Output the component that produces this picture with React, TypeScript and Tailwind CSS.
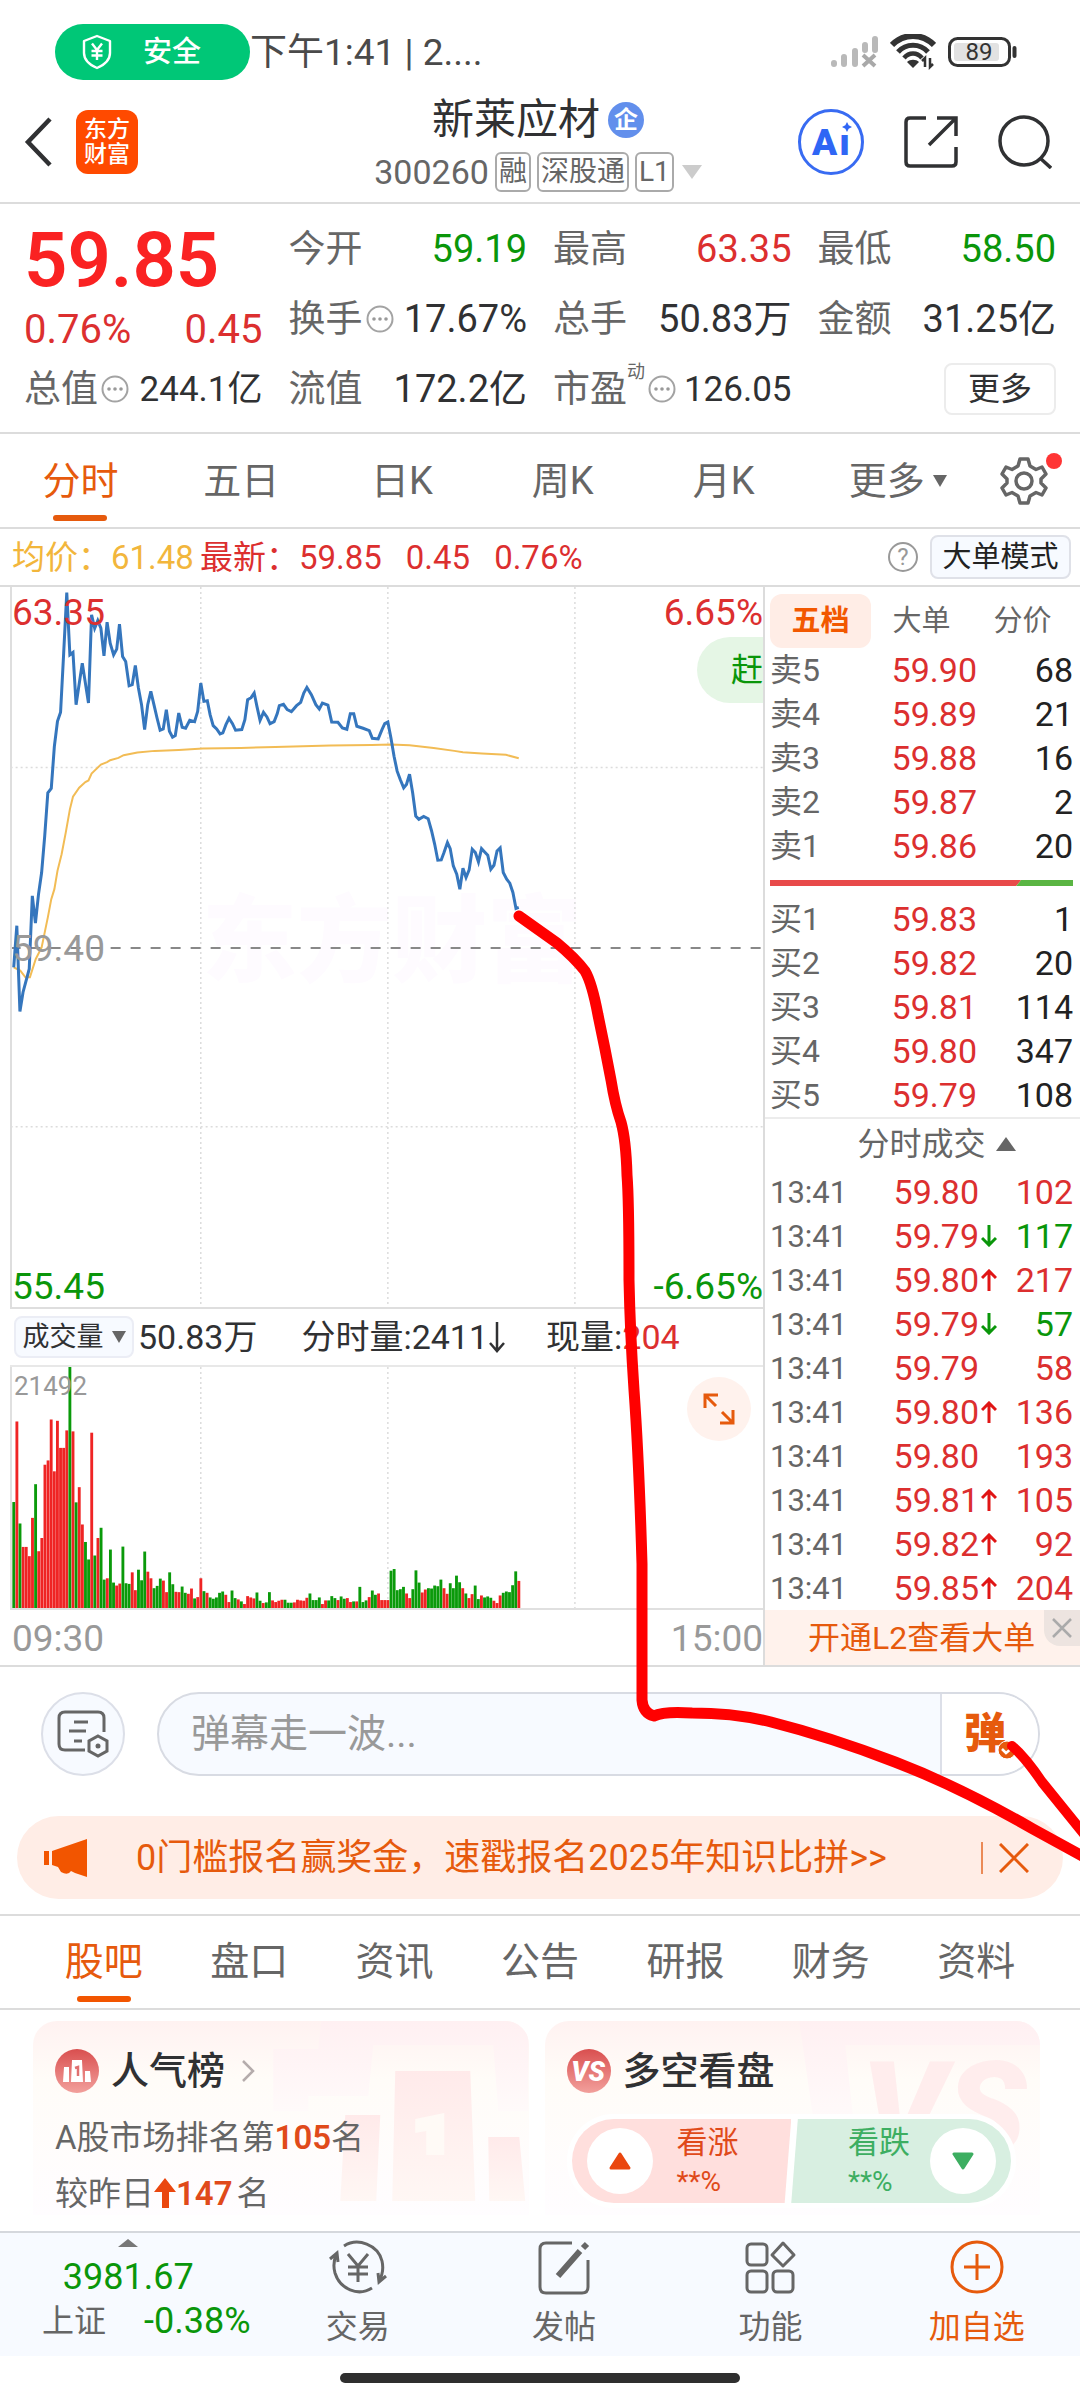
import { useState } from 'react';
import type { ReactNode } from 'react';

// 个股详情页：行情头部、分时图、五档盘口、成交明细、底部导航

const RED = 'text-[#dc2f2f]';
const GREEN = 'text-[#0a960a]';
const DARK = 'text-[#303133]';

const PERIODS = ['分时', '五日', '日K', '周K', '月K'];
const SECTIONS = ['股吧', '盘口', '资讯', '公告', '研报', '财务', '资料'];

const SELLS = [
  ['卖5', '59.90', '68'],
  ['卖4', '59.89', '21'],
  ['卖3', '59.88', '16'],
  ['卖2', '59.87', '2'],
  ['卖1', '59.86', '20'],
];

const BUYS = [
  ['买1', '59.83', '1'],
  ['买2', '59.82', '20'],
  ['买3', '59.81', '114'],
  ['买4', '59.80', '347'],
  ['买5', '59.79', '108'],
];

const TRADES = [
  { price: '59.80', dir: '', vol: '102' },
  { price: '59.79', dir: 'down', vol: '117' },
  { price: '59.80', dir: 'up', vol: '217' },
  { price: '59.79', dir: 'down', vol: '57' },
  { price: '59.79', dir: '', vol: '58' },
  { price: '59.80', dir: 'up', vol: '136' },
  { price: '59.80', dir: '', vol: '193' },
  { price: '59.81', dir: 'up', vol: '105' },
  { price: '59.82', dir: 'up', vol: '92' },
  { price: '59.85', dir: 'up', vol: '204' },
];

// 分时价格线
const PRICE_LINE =
  '41,1165 50,1040 59,1298 68,1240 86,1170 95,950 104,1032 113,945 122,880 131,770 140,640 150,627 159,500 168,425 177,398 186,220 195,38 204,225 213,218 222,375 240,250 258,370 267,105 276,145 285,122 294,145 303,228 312,127 321,190 331,225 340,208 348,133 357,230 366,245 376,318 385,315 394,257 403,325 412,375 421,450 430,375 439,335 448,375 457,415 466,452 475,448 484,390 493,455 502,473 510,468 520,400 530,443 540,446 552,422 566,426 575,395 584,310 593,365 603,363 611,405 620,438 630,448 640,463 648,460 657,435 666,416 676,432 685,452 703,450 712,420 720,360 730,354 739,340 747,380 756,422 766,398 776,412 785,432 797,426 806,402 812,378 824,374 835,390 847,396 862,378 874,368 883,340 892,323 905,345 918,375 928,388 937,370 953,376 964,427 982,428 995,445 1008,449 1018,402 1028,402 1037,440 1055,446 1073,453 1082,476 1099,478 1110,450 1118,432 1127,427 1136,475 1145,530 1154,575 1163,600 1173,625 1181,615 1190,584 1199,640 1208,710 1217,720 1231,711 1244,718 1254,755 1263,795 1272,843 1282,842 1290,820 1300,790 1308,808 1317,860 1327,885 1336,930 1345,867 1354,895 1363,872 1372,810 1381,820 1390,848 1399,808 1408,818 1417,828 1426,870 1435,858 1444,815 1453,806 1462,880 1472,900 1481,912 1490,940 1499,988 1507,985';

// 均价线
const AVG_LINE =
  '41,1165 60,1175 75,1195 88,1195 105,1140 122,1105 131,1060 140,1015 150,960 159,930 168,875 180,825 192,760 204,690 213,652 231,625 249,608 258,603 267,582 294,555 312,548 321,542 345,535 360,527 400,519 450,514 520,511 590,507 700,505 800,502 880,500 960,498 1080,496 1136,495 1190,497 1260,505 1320,514 1345,518 1400,522 1470,526 1507,536';

// 每分钟成交量，正数为红柱，负数为绿柱
const VOLUMES = [
  -321, 565, -256, 185, 185, 157, 273, -375, 172, 212, 434, 447, 571, 414, 567, 485, 485, 538, -730, 535,
  -320, 366, 253, -200, -147, 531, -159, 212, -243, -86, 90, -177, -77, 68, 74, -186, -75, -73, 108, 54,
  -116, -84, -171, 110, 90, -60, -67, -89, 83, 48, -108, -72, 49, 48, -65, -46, 43, 59, -29, 33,
  90, -51, 46, -32, -28, -32, -46, -50, 40, 18, -53, -30, 26, -20, 12, 36, 32, 29, -47, -22,
  15, -17, -48, 23, 18, 22, 25, -25, -16, -16, 17, 25, 23, 22, 31, -44, -24, -24, -32, 12,
  23, -23, -36, -30, 24, -35, -28, 30, 18, -20, 20, -64, -18, -23, 33, -53, -40, 44, 24, 24,
  24, -113, -118, -54, -57, -64, 44, 30, -57, -114, -77, 47, 56, -60, -59, -68, -66, -86, 60, 43,
  -75, -60, -98, -78, 60, -44, 30, 42, -68, -27, 38, -32, -35, -31, 22, 15, 38, -46, -50, -48,
  -69, -111, 82,
];

function MoreDots() {
  return (
    <svg viewBox="0 0 28 28" className="ml-[3px] h-7 w-7 shrink-0" aria-hidden="true">
      <circle cx="14" cy="14" r="12.5" fill="none" stroke="#a3a3a3" strokeWidth="2" />
      <g fill="#999">
        <circle cx="8" cy="14" r="1.8" />
        <circle cx="14" cy="14" r="1.8" />
        <circle cx="20" cy="14" r="1.8" />
      </g>
    </svg>
  );
}

function Stat({ label, value, color = DARK, size = 'text-[38px]', dots = false, sup }: {
  label: string;
  value: string;
  color?: string;
  size?: string;
  dots?: boolean;
  sup?: string;
}) {
  return (
    <div className="flex h-[70px] items-center whitespace-nowrap">
      <span className="text-[37px] text-[#666]">{label}</span>
      {sup && <span className="self-start pt-1 text-lg text-[#666]">{sup}</span>}
      {dots && <MoreDots />}
      <span className={`ml-auto ${size} ${color}`}>{value}</span>
    </div>
  );
}

function StatusBar() {
  return (
    <div className="flex h-[88px] items-center pt-4 pr-[62px] pl-[55px]">
      <div className="flex h-14 w-[195px] items-center rounded-full bg-[#00c777] pl-[26px] text-white">
        <svg viewBox="0 0 32 36" className="h-9 w-8" fill="none" stroke="#fff" strokeWidth="2.4" aria-hidden="true">
          <path d="M16 2 L29 7 V19 C29 26 23 31 16 34 C9 31 3 26 3 19 V7 Z" strokeLinejoin="round" />
          <path d="M11 9.500 L16 16 L21 9.500 M16 16 V26 M10.500 17 H21.500 M10.500 21.500 H21.500" />
        </svg>
        <span className="ml-[30px] text-[29px] font-medium">安全</span>
      </div>
      <span className="text-[37px] text-[#4a4a4a]">下午1:41 | 2....</span>
      <div className="ml-auto flex items-center gap-3">
        <svg viewBox="0 0 48 32" className="h-8 w-12" aria-hidden="true">
          <g stroke="#b9b9b9" strokeWidth="6" strokeLinecap="round">
            <path d="M4 28 V27 M14 28 V21 M25 28 V15 M35 14 V9 M45 14 V3" />
          </g>
          <path d="M33 19 L45 30 M45 19 L33 30" stroke="#a9a9a9" strokeWidth="4" />
        </svg>
        <svg viewBox="0 0 46 36" className="h-9 w-[46px]" fill="none" stroke="#333" aria-hidden="true">
          <path d="M2 11 C14 -1 32 -1 44 11" strokeWidth="6" />
          <path d="M8 18 C16 9 30 9 38 18" strokeWidth="5" />
          <path d="M14 24 C19 18 27 18 32 24" strokeWidth="4.500" />
          <path d="M23 34 L17 28 C20 25 26 25 29 28 Z" fill="#333" stroke="none" />
          <path d="M35 33 V24 L32 27 M40 24 V33 L43 30" strokeWidth="2.500" />
        </svg>
        <svg viewBox="0 0 70 30" className="h-[30px] w-[70px]" aria-hidden="true">
          <rect x="1.500" y="1.500" width="60" height="27" rx="8" fill="#fff" stroke="#333" strokeWidth="3" />
          <rect x="6" y="6" width="45" height="18" rx="3" fill="#e2e2e2" />
          <path d="M66.500 11 V19" stroke="#333" strokeWidth="4" strokeLinecap="round" />
          <text x="31" y="23" fontSize="24" textAnchor="middle" fill="#333">89</text>
        </svg>
      </div>
    </div>
  );
}

function Header() {
  return (
    <header className="grid h-[116px] grid-cols-[1fr_auto_1fr] items-center border-b-2 border-[#dcdcdc] pr-7 pb-1.5 pl-6">
      <div className="flex items-center gap-6">
        <button aria-label="返回">
          <svg viewBox="0 0 28 50" className="h-[50px] w-7" fill="none" stroke="#303133" strokeWidth="4.500">
            <path d="M26 2 L4 25 L26 48" />
          </svg>
        </button>
        <div className="flex h-16 w-[62px] flex-col items-center justify-center rounded-xl bg-[#ff4a00] text-[23px] leading-[25px] font-medium text-white">
          <span>东方</span>
          <span>财富</span>
        </div>
      </div>
      <div className="flex flex-col items-center gap-2.5 pt-1.5">
        <h1 className="flex h-11 items-center gap-2 text-[42px] text-[#303133]">
          新莱应材
          <span className="flex h-9 w-9 items-center justify-center rounded-full bg-[#628fec] text-2xl font-bold text-white">企</span>
        </h1>
        <div className="flex h-10 items-center gap-1.5 text-[28px] text-[#666]">
          <span className="text-[34px]">300260</span>
          <span className="flex h-10 items-center rounded-md border-2 border-[#aaa] px-0.5">融</span>
          <span className="flex h-10 items-center rounded-md border-2 border-[#aaa] px-0.5">深股通</span>
          <span className="flex h-10 items-center rounded-md border-2 border-[#aaa] px-0.5">L1</span>
          <svg viewBox="0 0 20 14" className="ml-0.5 h-3.5 w-5" aria-hidden="true">
            <path d="M0 0 H20 L10 14 Z" fill="#ccc" />
          </svg>
        </div>
      </div>
      <div className="flex items-center justify-end gap-10">
        <button aria-label="AI 助手" className="relative flex h-[66px] w-[66px] items-center justify-center gap-0.5 rounded-full border-[3px] border-[#386bf2] text-[37px] font-black text-[#2f66f5]">
          <span>A</span>
          <span>ı</span>
          <svg viewBox="0 0 12 12" className="absolute top-[10px] right-[9px] h-2.5 w-2.5" aria-hidden="true">
            <path d="M6 0 L8 4 L12 6 L8 8 L6 12 L4 8 L0 6 L4 4 Z" fill="#2f66f5" />
          </svg>
        </button>
        <button aria-label="分享">
          <svg viewBox="0 0 54 54" className="h-[54px] w-[54px]" fill="none" stroke="#303133" strokeWidth="3.500">
            <path d="M22 3 H6 Q2 3 2 7 V47 Q2 51 6 51 H48 Q52 51 52 47 V32" />
            <path d="M25 30 L51 4 M33 3 H52 V21" />
          </svg>
        </button>
        <button aria-label="搜索">
          <svg viewBox="0 0 54 54" className="h-[54px] w-[54px]" fill="none" stroke="#303133" strokeWidth="3.500">
            <circle cx="26" cy="26" r="24" />
            <path d="M42 43 L53 53" />
          </svg>
        </button>
      </div>
    </header>
  );
}

function Quote() {
  return (
    <section className="grid grid-cols-4 gap-x-[26px] border-b-2 border-[#dcdcdc] px-6 pt-2.5 pb-2">
      <div className="row-span-2 flex flex-col text-[#dc2f2f]">
        <strong className="flex h-[92px] items-center text-[76px] font-semibold text-[#fa2222]">59.85</strong>
        <div className="flex h-12 items-center justify-between text-[40px]">
          <span>0.76%</span>
          <span>0.45</span>
        </div>
      </div>
      <Stat label="今开" value="59.19" color={GREEN} />
      <Stat label="最高" value="63.35" color={RED} />
      <Stat label="最低" value="58.50" color={GREEN} />
      <Stat label="换手" value="17.67%" dots />
      <Stat label="总手" value="50.83万" />
      <Stat label="金额" value="31.25亿" />
      <Stat label="总值" value="244.1亿" size="text-[35px]" dots />
      <Stat label="流值" value="172.2亿" />
      <Stat label="市盈" value="126.05" size="text-[35px]" sup="动" dots />
      <div className="flex items-center justify-end">
        <button className="h-[52px] w-28 rounded-lg border-2 border-[#ececec] text-[32px] text-[#303133]">更多</button>
      </div>
    </section>
  );
}

function PeriodTabs() {
  const [active, setActive] = useState('分时');
  return (
    <nav className="flex h-[95px] border-b-2 border-[#dcdcdc] pr-2 text-[38px] text-[#666]">
      {PERIODS.map((p) => (
        <button
          key={p}
          onClick={() => setActive(p)}
          className={p === active ? 'relative w-[15%] text-[#e65a0d]' : 'relative w-[15%]'}
        >
          {p}
          {p === active && <span className="absolute bottom-1.5 left-1/2 h-1.5 w-[54px] -translate-x-1/2 rounded-full bg-[#e65a0d]" />}
        </button>
      ))}
      <button className="flex w-[16%] items-center justify-center gap-2 pl-4">
        更多
        <svg viewBox="0 0 14 12" className="h-3 w-3.5" aria-hidden="true">
          <path d="M0 0 H14 L7 12 Z" fill="#666" />
        </svg>
      </button>
      <button aria-label="设置" className="relative flex flex-1 items-center justify-center">
        <svg viewBox="0 0 48 48" className="h-12 w-12" fill="none" stroke="#666" strokeWidth="3.500" strokeLinejoin="round">
          <path d="M20 2 H28 L30 9 L36 12.500 L42 10 L46 17 L41 22 V26 L46 31 L42 38 L36 35.500 L30 39 L28 46 H20 L18 39 L12 35.500 L6 38 L2 31 L7 26 V22 L2 17 L6 10 L12 12.500 L18 9 Z" />
          <circle cx="24" cy="24" r="8" />
        </svg>
        <span className="absolute top-[19px] right-2.5 h-4 w-4 rounded-full bg-[#ff3434]" />
      </button>
    </nav>
  );
}

function ChartInfo() {
  return (
    <div className="flex h-[58px] items-center border-b-2 border-[#dcdcdc] pr-[9px] pl-3 text-[33px] whitespace-nowrap text-[#dc2f2f]">
      <span className="text-[#f2b63c]">均价：61.48</span>
      <span className="ml-1.5">最新：59.85</span>
      <span className="ml-6">0.45</span>
      <span className="ml-6">0.76%</span>
      <button aria-label="说明" className="ml-auto flex h-[30px] w-[30px] items-center justify-center rounded-full border-2 border-[#999] text-2xl text-[#999]">?</button>
      <button className="ml-3 h-11 w-[141px] rounded-lg border-2 border-[#dfe1e8] bg-[#f7faff] text-[29px] text-[#222]">大单模式</button>
    </div>
  );
}

function PriceChart() {
  return (
    <div className="relative h-[722px] overflow-hidden border-b-2 border-l-2 border-[#dedede] text-[37px] leading-none">
      <span className="absolute top-[308px] left-[190px] text-[95px] font-black whitespace-nowrap text-[#fefbff]">东方财富</span>
      <svg viewBox="36 21 2180 2166" preserveAspectRatio="none" className="absolute inset-0 h-full w-full" fill="none">
        <g stroke="#dcdcdc" strokeWidth="1.500" strokeDasharray="2 3">
          <path vectorEffect="non-scaling-stroke" d="M32 564 H2216" />
          <path vectorEffect="non-scaling-stroke" d="M32 1645 H2216" />
          <path vectorEffect="non-scaling-stroke" d="M584 21 V2187" />
          <path vectorEffect="non-scaling-stroke" d="M1127 21 V2187" />
          <path vectorEffect="non-scaling-stroke" d="M1670 21 V2187" />
        </g>
        <path vectorEffect="non-scaling-stroke" d="M32 1107 H2216" stroke="#888" strokeWidth="2" strokeDasharray="10 10" />
        <polyline vectorEffect="non-scaling-stroke" points={AVG_LINE} stroke="#f2bc55" strokeWidth="2" />
        <polyline vectorEffect="non-scaling-stroke" points={PRICE_LINE} stroke="#3576bd" strokeWidth="3" />
      </svg>
      <span className="absolute top-[7px] left-0 text-[#dc2f2f]">63.35</span>
      <span className="absolute top-[7px] right-0 text-[#dc2f2f]">6.65%</span>
      <span className="absolute top-[343px] left-0 text-[#999]">59.40</span>
      <span className="absolute bottom-0.5 left-0 text-[#0a960a]">55.45</span>
      <span className="absolute right-0 bottom-0.5 text-[#0a960a]">-6.65%</span>
      <button className="absolute top-[50px] right-0 h-[66px] w-[66px] rounded-l-full bg-[#e5f6e5] text-right text-[32px] text-[#0a960a]">赶</button>
    </div>
  );
}

function VolumeChart() {
  return (
    <>
      <div className="flex h-[58px] items-center border-b-2 border-[#e8e8e8] pl-1 text-[34px] whitespace-nowrap text-[#303133]">
        <button className="flex h-[42px] w-[120px] items-center justify-center gap-2 rounded-lg border-2 border-[#ebedf5] bg-[#f7faff] text-[27px]">
          成交量
          <svg viewBox="0 0 14 12" className="h-3 w-3.5" aria-hidden="true">
            <path d="M0 0 H14 L7 12 Z" fill="#666" />
          </svg>
        </button>
        <span className="ml-1">50.83万</span>
        <span className="ml-11">分时量:2411</span>
        <svg viewBox="0 0 18 32" className="h-8 w-[18px]" fill="none" stroke="#303133" strokeWidth="2.500" aria-hidden="true">
          <path d="M9 1 V30 M2 22 L9 30 L16 22" />
        </svg>
        <span className="ml-10">
          现量:<span className="text-[#dc2f2f]">204</span>
        </span>
      </div>
      <div className="relative h-[243px] border-b-2 border-l-2 border-[#e0e0e0]">
        <svg viewBox="36 320 2180 730" preserveAspectRatio="none" className="absolute inset-0 h-full w-full">
          <g stroke="#dcdcdc" strokeWidth="1.500" strokeDasharray="2 3">
            <path vectorEffect="non-scaling-stroke" d="M584 320 V1050" />
            <path vectorEffect="non-scaling-stroke" d="M1127 320 V1050" />
            <path vectorEffect="non-scaling-stroke" d="M1670 320 V1050" />
          </g>
          {VOLUMES.map((v, i) => (
            <rect
              key={i}
              x={37 + i * 9.05}
              y={1050 - Math.abs(v)}
              width={8.3}
              height={Math.abs(v)}
              fill={v > 0 ? '#ef2424' : '#0a9a0a'}
            />
          ))}
        </svg>
        <span className="absolute top-1.5 left-0.5 text-[26px] leading-none text-[#999]">21492</span>
        <button aria-label="全屏" className="absolute top-2.5 right-3 flex h-16 w-16 items-center justify-center rounded-full bg-[#fff2ed]">
          <svg viewBox="0 0 32 32" className="h-8 w-8" fill="none" stroke="#e65a0d" strokeWidth="3">
            <path d="M2 15 V2 H15 M3 3 L13 13 M30 17 V30 H17 M29 29 L19 19" />
          </svg>
        </button>
      </div>
      <div className="flex h-[55px] items-center justify-between pt-0.5 pl-0.5 text-[37px] text-[#999]">
        <span>09:30</span>
        <span>15:00</span>
      </div>
    </>
  );
}

function Levels({ rows, name }: { rows: string[][]; name: string }) {
  return (
    <table className="w-full text-[34px] leading-none" aria-label={name}>
      <tbody>
        {rows.map(([label, price, vol]) => (
          <tr key={label} className="h-11">
            <td className="w-[70px] p-0 text-[32px] text-[#666]">{label}</td>
            <td className="p-0 text-right text-[#dc2f2f]">{price}</td>
            <td className="w-24 p-0 text-right text-[#222]">{vol}</td>
          </tr>
        ))}
      </tbody>
    </table>
  );
}

function TradeArrow({ dir }: { dir: string }) {
  if (!dir) return null;
  return (
    <svg viewBox="0 0 16 22" className="ml-0.5 h-[22px] w-4" fill="none" stroke={dir === 'up' ? '#e01515' : '#0a960a'} strokeWidth="3">
      <path d={dir === 'up' ? 'M8 22 V3 M1 9 L8 2 L15 9' : 'M8 0 V19 M1 13 L8 20 L15 13'} />
    </svg>
  );
}

function OrderBook() {
  return (
    <aside className="w-[317px] shrink-0 border-l-2 border-[#dcdcdc]">
      <div className="flex h-[61px] items-end pl-[5px] text-[29px] text-[#666]">
        <button className="h-[54px] w-[101px] rounded-xl bg-[#ffede6] font-bold text-[#f25800]">五档</button>
        <button className="h-[54px] w-[101px]">大单</button>
        <button className="h-[54px] w-[101px]">分价</button>
      </div>
      <div className="pr-[7px] pl-[5px]">
        <Levels rows={SELLS} name="卖盘" />
        <div className="flex h-[29px] items-center">
          <svg viewBox="0 0 304 6" preserveAspectRatio="none" className="h-1.5 w-full" aria-hidden="true">
            <path d="M0 0 H252 L247 6 H0 Z" fill="#e84a4a" />
            <path d="M252 0 H304 V6 H247 Z" fill="#5ab543" />
          </svg>
        </div>
        <Levels rows={BUYS} name="买盘" />
      </div>
      <button className="flex h-[52px] w-full items-center justify-center gap-2.5 border-t-2 border-[#ececec] pl-7 text-[32px] text-[#666]">
        分时成交
        <svg viewBox="0 0 20 14" className="h-3.5 w-5" aria-hidden="true">
          <path d="M10 0 L20 14 H0 Z" fill="#666" />
        </svg>
      </button>
      <div className="pt-px pr-[7px] pl-[5px]">
        <table className="w-full text-[34px] leading-none" aria-label="分时成交">
          <tbody>
            {TRADES.map((t, i) => (
              <tr key={i} className="h-11">
                <td className="w-20 p-0 text-[31px] text-[#666]">13:41</td>
                <td className="p-0 text-right text-[#dc2f2f]">{t.price}</td>
                <td className="w-5 p-0">
                  <TradeArrow dir={t.dir} />
                </td>
                <td className={t.dir === 'down' ? 'w-[74px] p-0 text-right text-[#0a960a]' : 'w-[74px] p-0 text-right text-[#dc2f2f]'}>{t.vol}</td>
              </tr>
            ))}
          </tbody>
        </table>
      </div>
      <div className="relative flex h-[55px] items-center bg-[#fff2ec] pl-[43px]">
        <a href="#l2" className="text-[32px] whitespace-nowrap text-[#e65a0d]">开通L2查看大单</a>
        <button aria-label="关闭" className="absolute top-0 right-0 flex h-9 w-9 items-center justify-center rounded-bl-2xl bg-[#ede4e0]">
          <svg viewBox="0 0 20 20" className="h-5 w-5" stroke="#aaa" strokeWidth="2.500">
            <path d="M1 1 L19 19 M19 1 L1 19" />
          </svg>
        </button>
      </div>
    </aside>
  );
}

function CommentBar() {
  return (
    <div className="flex items-center pt-[25px] pr-10 pl-[41px]">
      <button aria-label="弹幕设置" className="flex h-[84px] w-[84px] items-center justify-center rounded-full border-2 border-[#dcdfe8] bg-[#f7faff]">
        <svg viewBox="0 0 52 48" className="h-12 w-[52px]" fill="none" stroke="#666" strokeWidth="3">
          <path d="M47 22 V8 Q47 2 41 2 H8 Q2 2 2 8 V34 Q2 40 8 40 H28" />
          <path d="M17 12 H31 M12 21 H29 M17 31 H25" />
          <path d="M41 26 L50 31 V41 L41 46 L32 41 V31 Z" />
          <circle cx="41" cy="36" r="2.500" fill="#666" stroke="none" />
        </svg>
      </button>
      <div className="ml-8 flex h-[84px] flex-1 overflow-hidden rounded-full border-2 border-[#d8dbe3] bg-[#f7faff]">
        <input
          aria-label="弹幕"
          placeholder="弹幕走一波..."
          className="min-w-0 flex-1 bg-transparent pl-8 text-[39px] outline-none placeholder:text-[#999]"
        />
        <button className="relative w-[98px] border-l-2 border-[#dcdfe8] bg-white pr-2.5 text-[42px] font-black text-[#e65a0d]">
          弹
          <svg viewBox="0 0 20 20" className="absolute top-[46px] left-[55px] h-5 w-5" aria-hidden="true">
            <circle cx="10" cy="10" r="9" fill="#e65a0d" stroke="#fff" />
            <path d="M5 9 L9 13 L15 8" fill="none" stroke="#fff" strokeWidth="2.500" />
          </svg>
        </button>
      </div>
    </div>
  );
}

function Notice() {
  return (
    <div className="mx-[17px] mt-10 mb-[15px] flex h-[83px] items-center rounded-full bg-[#ffede6] pr-[34px] pl-[27px] text-[#e65a0d]">
      <svg viewBox="0 0 44 38" className="h-[38px] w-11" fill="#f25500" aria-hidden="true">
        <path d="M0 12 H5 V26 H0 Z M8 12 L43 0 V38 L31 34 L27 32 Q24 37 17 33 L14 28 L8 26 Z" />
      </svg>
      <a href="#notice" className="ml-12 text-[36px] whitespace-nowrap">0门槛报名赢奖金，速戳报名2025年知识比拼&gt;&gt;</a>
      <span className="ml-auto h-8 w-0.5 bg-[#eb8a57]" />
      <button aria-label="关闭公告" className="ml-4">
        <svg viewBox="0 0 30 30" className="h-[30px] w-[30px]" stroke="#e65a0d" strokeWidth="3">
          <path d="M1 1 L29 29 M29 1 L1 29" />
        </svg>
      </button>
    </div>
  );
}

function SectionTabs() {
  const [active, setActive] = useState('股吧');
  return (
    <nav className="flex h-24 border-y-2 border-[#dcdcdc] px-[31px] text-[39px] text-[#666]">
      {SECTIONS.map((s) => (
        <button key={s} onClick={() => setActive(s)} className={s === active ? 'relative flex-1 text-[#e65a0d]' : 'relative flex-1'}>
          {s}
          {s === active && <span className="absolute bottom-1.5 left-1/2 h-1.5 w-[54px] -translate-x-1/2 rounded-full bg-[#f25500]" />}
        </button>
      ))}
    </nav>
  );
}

function Card({ children, art }: { children: ReactNode; art: ReactNode }) {
  return (
    <div className="relative h-[194px] flex-1 overflow-hidden rounded-t-3xl bg-gradient-to-b from-[#fff2f1] via-[#fffcf8] via-30% to-[#fffdff]">
      {art}
      <div className="relative">{children}</div>
    </div>
  );
}

function Cards() {
  return (
    <section className="flex gap-4 pt-[11px] pr-10 pb-4 pl-[33px]">
      <Card
        art={
          <svg viewBox="0 0 495 194" className="absolute inset-0 h-full w-full" aria-hidden="true">
            <defs>
              <linearGradient id="shade" x1="0" y1="0" x2="0" y2="1">
                <stop offset="0" stopColor="#fff0f2" />
                <stop offset="1" stopColor="#fffafa" />
              </linearGradient>
              <linearGradient id="podium" x1="0" y1="0" x2="0" y2="1">
                <stop offset="0" stopColor="#ffeaea" />
                <stop offset="1" stopColor="#fff7f4" />
              </linearGradient>
            </defs>
            <path d="M288 0 H495 V90 H465 L460 24 H340 L335 75 H275 V90 H240 V28 H285 Z" fill="url(#shade)" />
            <g fill="url(#podium)">
              <path d="M362 50 H437 L442 180 H359 Z" />
              <path d="M312 94 H347 L343 180 H307 Z" />
              <path d="M455 116 H486 L492 180 H456 Z" />
            </g>
            <path d="M382 98 L411 92 V134 H393 V110 L382 112 Z" fill="#fffaf6" />
          </svg>
        }
      >
        <div className="pt-7 pl-[22px]">
          <h2 className="flex h-11 items-center text-[38px] font-medium text-[#303133]">
            <svg viewBox="0 0 44 44" className="mr-3 h-11 w-11" aria-hidden="true">
              <defs>
                <linearGradient id="badge" x1="0" y1="0" x2="0" y2="1">
                  <stop offset="0" stopColor="#d94f4f" />
                  <stop offset="1" stopColor="#f2a09c" />
                </linearGradient>
              </defs>
              <circle cx="22" cy="22" r="22" fill="url(#badge)" />
              <path d="M17 11 H27 L28 33 H16 Z M9 18 H14 V33 H8 Z M30 22 H35 L36 33 H30 Z" fill="#fff" />
              <path d="M20 19 L23 18 V27" fill="none" stroke="#e07070" strokeWidth="2.500" />
            </svg>
            人气榜
            <svg viewBox="0 0 14 22" className="ml-4 h-[22px] w-3.5" fill="none" stroke="#b5acac" strokeWidth="2.500" aria-hidden="true">
              <path d="M2 1 L12 11 L2 21" />
            </svg>
          </h2>
          <p className="mt-[22px] flex h-11 items-center text-[33px] text-[#666]">
            A股市场排名第<b className="font-semibold text-[#e04a1a]">105</b>名
          </p>
          <p className="mt-3 flex h-11 items-center text-[33px] text-[#666]">
            较昨日
            <svg viewBox="0 0 22 30" className="h-[30px] w-[22px]" fill="#ea470f" aria-hidden="true">
              <path d="M11 0 L22 14 H15 V30 H8 V14 H0 Z" />
            </svg>
            <b className="mr-1 font-semibold text-[#e04a1a]">147</b>名
          </p>
        </div>
      </Card>
      <Card
        art={
          <svg viewBox="0 0 495 194" className="absolute inset-0 h-full w-full" aria-hidden="true">
            <path d="M254 0 H495 V24 H300 L308 98 H268 Z" fill="url(#shade)" />
            <text x="316" y="134" fontSize="132" fontWeight="900" fontStyle="italic" fill="#ffeded">VS</text>
          </svg>
        }
      >
        <div className="pt-7 pr-6 pl-[22px]">
          <h2 className="flex h-11 items-center text-[38px] font-medium text-[#303133]">
            <svg viewBox="0 0 44 44" className="mr-3 h-11 w-11" aria-hidden="true">
              <circle cx="22" cy="22" r="22" fill="url(#badge)" />
              <text x="21" y="32" fontSize="27" fontWeight="900" fontStyle="italic" textAnchor="middle" fill="#fff">VS</text>
            </svg>
            多空看盘
          </h2>
          <div className="mt-[21px] flex h-[94px] overflow-hidden rounded-full border-[5px] border-white bg-white text-[31px] leading-none">
            <button className="flex flex-1 items-center bg-[#ffdfdd] pl-[15px] text-left text-[#e04a1a] [clip-path:polygon(0_0,100%_0,97%_100%,0_100%)]">
              <span className="mr-6 flex h-[66px] w-[66px] items-center justify-center rounded-full bg-white">
                <svg viewBox="0 0 22 18" className="h-[18px] w-[22px]" fill="#ea470f" stroke="#ea470f" strokeWidth="3" strokeLinejoin="round">
                  <path d="M11 2 L20 16 H2 Z" />
                </svg>
              </span>
              <span>
                看涨
                <span className="mt-2.5 block text-[28px]">**%</span>
              </span>
            </button>
            <button className="flex flex-1 items-center justify-end bg-[#d8efe1] pr-[15px] text-left text-[#3dae61] [clip-path:polygon(3%_0,100%_0,100%_100%,0_100%)]">
              <span>
                看跌
                <span className="mt-2.5 block text-[28px]">**%</span>
              </span>
              <span className="ml-5 flex h-[66px] w-[66px] items-center justify-center rounded-full bg-white">
                <svg viewBox="0 0 22 18" className="h-[18px] w-[22px]" fill="#3dae61" stroke="#3dae61" strokeWidth="3" strokeLinejoin="round">
                  <path d="M2 2 H20 L11 16 Z" />
                </svg>
              </span>
            </button>
          </div>
        </div>
      </Card>
    </section>
  );
}

function NavItem({ label, color = 'text-[#666]', children }: { label: string; color?: string; children: ReactNode }) {
  return (
    <a href={`#${label}`} className={`flex flex-1 flex-col items-center gap-2.5 pt-1.5 text-[32px] leading-[44px] ${color}`}>
      <svg viewBox="0 0 60 56" className="h-14 w-[60px]" fill="none" stroke="currentColor" strokeWidth="3" aria-hidden="true">
        {children}
      </svg>
      {label}
    </a>
  );
}

function BottomNav() {
  return (
    <nav className="flex h-[125px] border-t-2 border-[#d5d8dd] bg-[#f7faff] pl-[42px]">
      <a href="#index" className="flex flex-1 flex-col items-center text-[36px] leading-[44px] whitespace-nowrap text-[#0a960a]">
        <span className="mr-10 flex flex-col items-center gap-2 pt-1.5">
          <svg viewBox="0 0 20 8" className="h-2 w-5" aria-hidden="true">
            <path d="M10 0 L20 8 H0 Z" fill="#777" />
          </svg>
          <span className="text-[36px]">3981.67</span>
        </span>
        <span className="mr-1 flex items-center gap-[38px]">
          <span className="text-[32px] text-[#666]">上证</span>-0.38%
        </span>
      </a>
      <NavItem label="交易">
        <path d="M16 7 C30 -2 50 6 54 22 C56 31 54 37 51 42 M44 49 C30 58 12 50 7 34 C5 27 6 21 8 16 M2 20 L9 14 L10 23 M50 34 L51 43 L58 37" />
        <path d="M20 15 L30 27 L40 15 M30 27 V43 M20 28 H40 M20 35 H40" />
      </NavItem>
      <NavItem label="发帖">
        <path d="M38 4 H12 Q6 4 6 10 V48 Q6 54 12 54 H48 Q54 54 54 48 V21" />
        <path d="M24 37 L46 12 M49 9 L53 5" strokeWidth="6" />
      </NavItem>
      <NavItem label="功能">
        <rect x="7" y="5" width="20" height="21" rx="4" />
        <rect x="7" y="32" width="20" height="21" rx="4" />
        <rect x="33" y="32" width="20" height="21" rx="4" />
        <path d="M43 4 L54 16 L43 27 L32 16 Z" strokeLinejoin="round" />
      </NavItem>
      <NavItem label="加自选" color="text-[#e65a0d]">
        <circle cx="30" cy="28" r="25" />
        <path d="M30 15 V41 M17 28 H43" />
      </NavItem>
    </nav>
  );
}

// 手绘走势标注，盖在整页上方
function Sketch() {
  return (
    <svg
      viewBox="0 0 1080 2400"
      className="pointer-events-none absolute inset-x-0 top-0 w-full"
      fill="none"
      stroke="#ff0000"
      strokeWidth="11"
      strokeLinecap="round"
      strokeLinejoin="round"
      aria-hidden="true"
    >
      <path d="M519 916 L557 943 Q575 958 585 971 Q592 983 598 1015 Q605 1048 611 1080 Q615 1105 621 1122 Q626 1140 627 1175 Q629 1200 629 1280 Q630 1330 634 1390 Q639 1460 642 1564 V1700 Q643 1713 654 1716 Q664 1711 692 1713 Q735 1713 771 1722 Q830 1737 895 1762 Q960 1787 1033 1829 L1084 1857" />
      <path d="M1012 1746 Q1025 1757 1042 1782 L1084 1834" strokeWidth="10" />
    </svg>
  );
}

export default function App() {
  return (
    <div className="relative overflow-hidden bg-white font-['Roboto','Noto_Sans_CJK_SC',sans-serif] leading-none">
      <StatusBar />
      <Header />
      <Quote />
      <PeriodTabs />
      <ChartInfo />
      <main className="flex border-b-2 border-[#dcdcdc]">
        <div className="min-w-0 flex-1 pl-2.5">
          <PriceChart />
          <VolumeChart />
        </div>
        <OrderBook />
      </main>
      <CommentBar />
      <Notice />
      <SectionTabs />
      <Cards />
      <BottomNav />
      <div className="flex h-11 items-center justify-center">
        <span className="h-2.5 w-[37%] rounded-full bg-[#2f2f2f]" />
      </div>
      <Sketch />
    </div>
  );
}
